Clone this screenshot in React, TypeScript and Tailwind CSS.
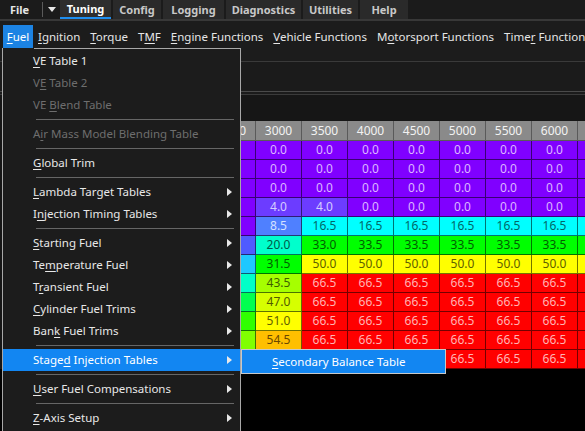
import React from 'react';

// colour keys for the table cells: [background, text]
const SWATCH: Record<string, [string, string]> = {
  P: ['bg-[#8000ff]', 'text-[#dcb8ff]'],
  V: ['bg-[#6c3cff]', 'text-[#d6ccff]'],
  B: ['bg-[#4f80ff]', 'text-[#d4e2ff]'],
  B2: ['bg-[#4f5bff]', 'text-[#d0d4ff]'],
  LB: ['bg-[#1ec8ff]', 'text-[#004a60]'],
  C: ['bg-[#00ffff]', 'text-[#006868]'],
  T: ['bg-[#00ffcc]', 'text-[#005a48]'],
  TQ: ['bg-[#00ffc8]', 'text-[#005a48]'],
  G: ['bg-[#00ff00]', 'text-[#006000]'],
  G2: ['bg-[#00ff50]', 'text-[#006020]'],
  G3: ['bg-[#30ff00]', 'text-[#106000]'],
  YG: ['bg-[#a6ff00]', 'text-[#3d6000]'],
  YG2: ['bg-[#80ff00]', 'text-[#306000]'],
  Y2: ['bg-[#d6ff00]', 'text-[#505c00]'],
  Y: ['bg-[#ffff00]', 'text-[#606000]'],
  O: ['bg-[#ffbf00]', 'text-[#6a4800]'],
  R: ['bg-[#ff0000]', 'text-[#ffb4b4]'],
};

// header labels; the columns left of 2500 sit fully under the open menu
const RPM = ['', '', '', '', '2500', '3000', '3500', '4000', '4500', '5000', '5500', '6000', '6500'];

type Cell = [string, string];
// columns 2500 .. 6500; the 2500 column sits under the menu, its colour only shows as a strip
const ROWS: Cell[][] = [
  [['', 'P'], ['0.0', 'P'], ['0.0', 'P'], ['0.0', 'P'], ['0.0', 'P'], ['0.0', 'P'], ['0.0', 'P'], ['0.0', 'P'], ['0.0', 'P']],
  [['', 'P'], ['0.0', 'P'], ['0.0', 'P'], ['0.0', 'P'], ['0.0', 'P'], ['0.0', 'P'], ['0.0', 'P'], ['0.0', 'P'], ['0.0', 'P']],
  [['', 'P'], ['0.0', 'P'], ['0.0', 'P'], ['0.0', 'P'], ['0.0', 'P'], ['0.0', 'P'], ['0.0', 'P'], ['0.0', 'P'], ['0.0', 'P']],
  [['', 'P'], ['4.0', 'V'], ['4.0', 'V'], ['0.0', 'P'], ['0.0', 'P'], ['0.0', 'P'], ['0.0', 'P'], ['0.0', 'P'], ['0.0', 'P']],
  [['', 'P'], ['8.5', 'B'], ['16.5', 'C'], ['16.5', 'C'], ['16.5', 'C'], ['16.5', 'C'], ['16.5', 'C'], ['16.5', 'C'], ['16.5', 'C']],
  [['', 'B2'], ['20.0', 'T'], ['33.0', 'G'], ['33.5', 'G'], ['33.5', 'G'], ['33.5', 'G'], ['33.5', 'G'], ['33.5', 'G'], ['33.5', 'G']],
  [['', 'LB'], ['31.5', 'G'], ['50.0', 'Y'], ['50.0', 'Y'], ['50.0', 'Y'], ['50.0', 'Y'], ['50.0', 'Y'], ['50.0', 'Y'], ['50.0', 'Y']],
  [['', 'TQ'], ['43.5', 'YG'], ['66.5', 'R'], ['66.5', 'R'], ['66.5', 'R'], ['66.5', 'R'], ['66.5', 'R'], ['66.5', 'R'], ['66.5', 'R']],
  [['', 'G2'], ['47.0', 'Y2'], ['66.5', 'R'], ['66.5', 'R'], ['66.5', 'R'], ['66.5', 'R'], ['66.5', 'R'], ['66.5', 'R'], ['66.5', 'R']],
  [['', 'G3'], ['51.0', 'Y'], ['66.5', 'R'], ['66.5', 'R'], ['66.5', 'R'], ['66.5', 'R'], ['66.5', 'R'], ['66.5', 'R'], ['66.5', 'R']],
  [['', 'YG2'], ['54.5', 'O'], ['66.5', 'R'], ['66.5', 'R'], ['66.5', 'R'], ['66.5', 'R'], ['66.5', 'R'], ['66.5', 'R'], ['66.5', 'R']],
  [['', 'YG2'], ['', 'O'], ['', 'R'], ['', 'R'], ['', 'R'], ['66.5', 'R'], ['66.5', 'R'], ['66.5', 'R'], ['66.5', 'R']],
];

// text with one underlined access-key letter
function Label({ text, u }: { text: string; u: number }) {
  return (
    <span className="whitespace-nowrap">
      {text.slice(0, u)}
      <span className="underline underline-offset-2">{text[u]}</span>
      {text.slice(u + 1)}
    </span>
  );
}

const TABS: [string, string][] = [
  ['Tuning', 'w-[51px]'],
  ['Config', 'w-[48px]'],
  ['Logging', 'w-[61px]'],
  ['Diagnostics', 'w-[75px]'],
  ['Utilities', 'w-[55px]'],
  ['Help', 'w-[48px]'],
];

const MENUBAR: [string, number][] = [
  ['Ignition', 0],
  ['Torque', 0],
  ['TMF', 1],
  ['Engine Functions', 0],
  ['Vehicle Functions', 0],
  ['Motorsport Functions', 1],
  ['Timer Functions', 4],
];

type Entry =
  | { sep: true }
  | { text: string; u: number; disabled?: boolean; sub?: boolean; active?: boolean };

const FUEL_MENU: Entry[] = [
  { text: 'VE Table 1', u: 0 },
  { text: 'VE Table 2', u: 1, disabled: true },
  { text: 'VE Blend Table', u: 3, disabled: true },
  { sep: true },
  { text: 'Air Mass Model Blending Table', u: 1, disabled: true },
  { sep: true },
  { text: 'Global Trim', u: 0 },
  { sep: true },
  { text: 'Lambda Target Tables', u: 0, sub: true },
  { text: 'Injection Timing Tables', u: 1, sub: true },
  { sep: true },
  { text: 'Starting Fuel', u: 0, sub: true },
  { text: 'Temperature Fuel', u: 2, sub: true },
  { text: 'Transient Fuel', u: 1, sub: true },
  { text: 'Cylinder Fuel Trims', u: 0, sub: true },
  { text: 'Bank Fuel Trims', u: 3, sub: true },
  { sep: true },
  { text: 'Staged Injection Tables', u: 5, sub: true, active: true },
  { sep: true },
  { text: 'User Fuel Compensations', u: 0, sub: true },
  { sep: true },
  { text: 'Z-Axis Setup', u: 0, sub: true },
];

function Arrow() {
  return (
    <svg width="5" height="8" viewBox="0 0 5 8" className="shrink-0">
      <path d="M0 0 L5 4 L0 8 Z" fill="#e8e8e8" />
    </svg>
  );
}

export default function App() {
  return (
    <div className="relative w-[585px] h-[431px] overflow-hidden bg-black font-['Noto_Sans','Open_Sans',sans-serif] text-[12px] leading-none">
      {/* title tabs */}
      <div className="flex h-[19px] items-stretch bg-[#1b1b1b] font-bold text-[11px]">
        <div className="flex w-[42px] shrink-0 items-center pl-[10px] text-[#e6e6e6]">File</div>
        <div className="my-[2px] w-px shrink-0 bg-[#5a5a5a]" />
        <div className="flex w-[17px] shrink-0 items-center justify-center">
          <svg width="8" height="5" viewBox="0 0 8 5">
            <path d="M0 0 H8 L4 5 Z" fill="#e6e6e6" />
          </svg>
        </div>
        <div className="flex gap-[2px]">
          {TABS.map(([t, w]) => (
            <div
              key={t}
              className={`flex shrink-0 items-center justify-center ${w} ${
                t === 'Tuning'
                  ? 'border-b-2 border-[#1e8ef0] bg-[#2e2e2e] text-white'
                  : 'bg-[#2a2a2a] text-[#c8c8c8]'
              }`}
            >
              {t}
            </div>
          ))}
        </div>
      </div>
      <div className="h-[2px] bg-[#383838]" />

      {/* menu bar */}
      <div className="flex h-[27px] items-end bg-[#1c1c1c] pl-[3px] text-[11.5px] text-[#e6e6e6]">
        <div className="flex h-[23px] w-[30px] shrink-0 items-center justify-center bg-[#1c83e3] text-white">
          <Label text="Fuel" u={0} />
        </div>
        <div className="flex h-[23px] shrink-0 items-center gap-[10px] pl-[5px]">
          {MENUBAR.map(([t, u]) => (
            <Label key={t} text={t} u={u} />
          ))}
        </div>
      </div>

      {/* editor area */}
      <div className="h-[13px] bg-[#1c1c1c]" />
      <div className="h-px bg-[#3a3a3a]" />
      <div className="h-[29px] bg-[#1b1b1b]" />
      <div className="h-px bg-[#4a4a4a]" />
      <div className="h-[2px] bg-[#1b1b1b]" />
      <div className="h-px bg-[#3a3a3a]" />
      <div className="h-[26px] bg-[#161616]" />

      {/* table */}
      <div className="flex flex-col">
        <div className="flex h-[20px]">
          <div className="w-[26px] shrink-0 bg-[#161616]" />
          {RPM.map((r, j) => (
            <div
              key={j}
              className="flex w-[46px] shrink-0 items-center justify-center border-r border-b border-[#5a5a5a] bg-[#8a8a8a] text-[#f2f2f2]"
            >
              {r}
            </div>
          ))}
        </div>
        {ROWS.map((row, i) => {
          const cells = [row[0], row[0], row[0], row[0], ...row];
          return (
            <div key={i} className="flex h-[19px]">
              <div className="w-[26px] shrink-0 bg-[#161616]" />
              {cells.map(([v, k], j) => (
                <div
                  key={j}
                  className={`flex w-[46px] shrink-0 items-center justify-center border-r border-b border-black/55 ${SWATCH[k][0]} ${SWATCH[k][1]}`}
                >
                  {v}
                </div>
              ))}
            </div>
          );
        })}
      </div>

      {/* open Fuel menu */}
      <div className="absolute left-[2px] top-[48px] h-[390px] w-[239px] border-l border-r border-[#a8a8a8] bg-[#1c1c1c] text-[11.5px]">
        <div className="ml-[31px] h-px bg-[#a8a8a8]" />
        <div className="flex flex-col pt-px">
          {FUEL_MENU.map((e, i) =>
            'sep' in e ? (
              <div key={i} className="flex h-[7px] items-center pl-[33px] pr-[6px]">
                <div className="h-px w-full bg-[#666666]" />
              </div>
            ) : (
              <div
                key={i}
                className={`flex h-[22px] items-center pl-[30px] pr-[8px] ${
                  e.active ? 'bg-[#1286f2] text-white' : e.disabled ? 'text-[#6e6e6e]' : 'text-[#e8e8e8]'
                }`}
              >
                <div className="flex-1">
                  <Label text={e.text} u={e.u} />
                </div>
                {e.sub && <Arrow />}
              </div>
            ),
          )}
        </div>
      </div>

      {/* Staged Injection Tables submenu */}
      <div className="absolute left-[241px] top-[349px] flex h-[25px] w-[205px] items-center border border-[#c8c8c8] bg-[#1286f2] pl-[30px] text-[11.5px] text-white">
        <Label text="Secondary Balance Table" u={0} />
      </div>
    </div>
  );
}
